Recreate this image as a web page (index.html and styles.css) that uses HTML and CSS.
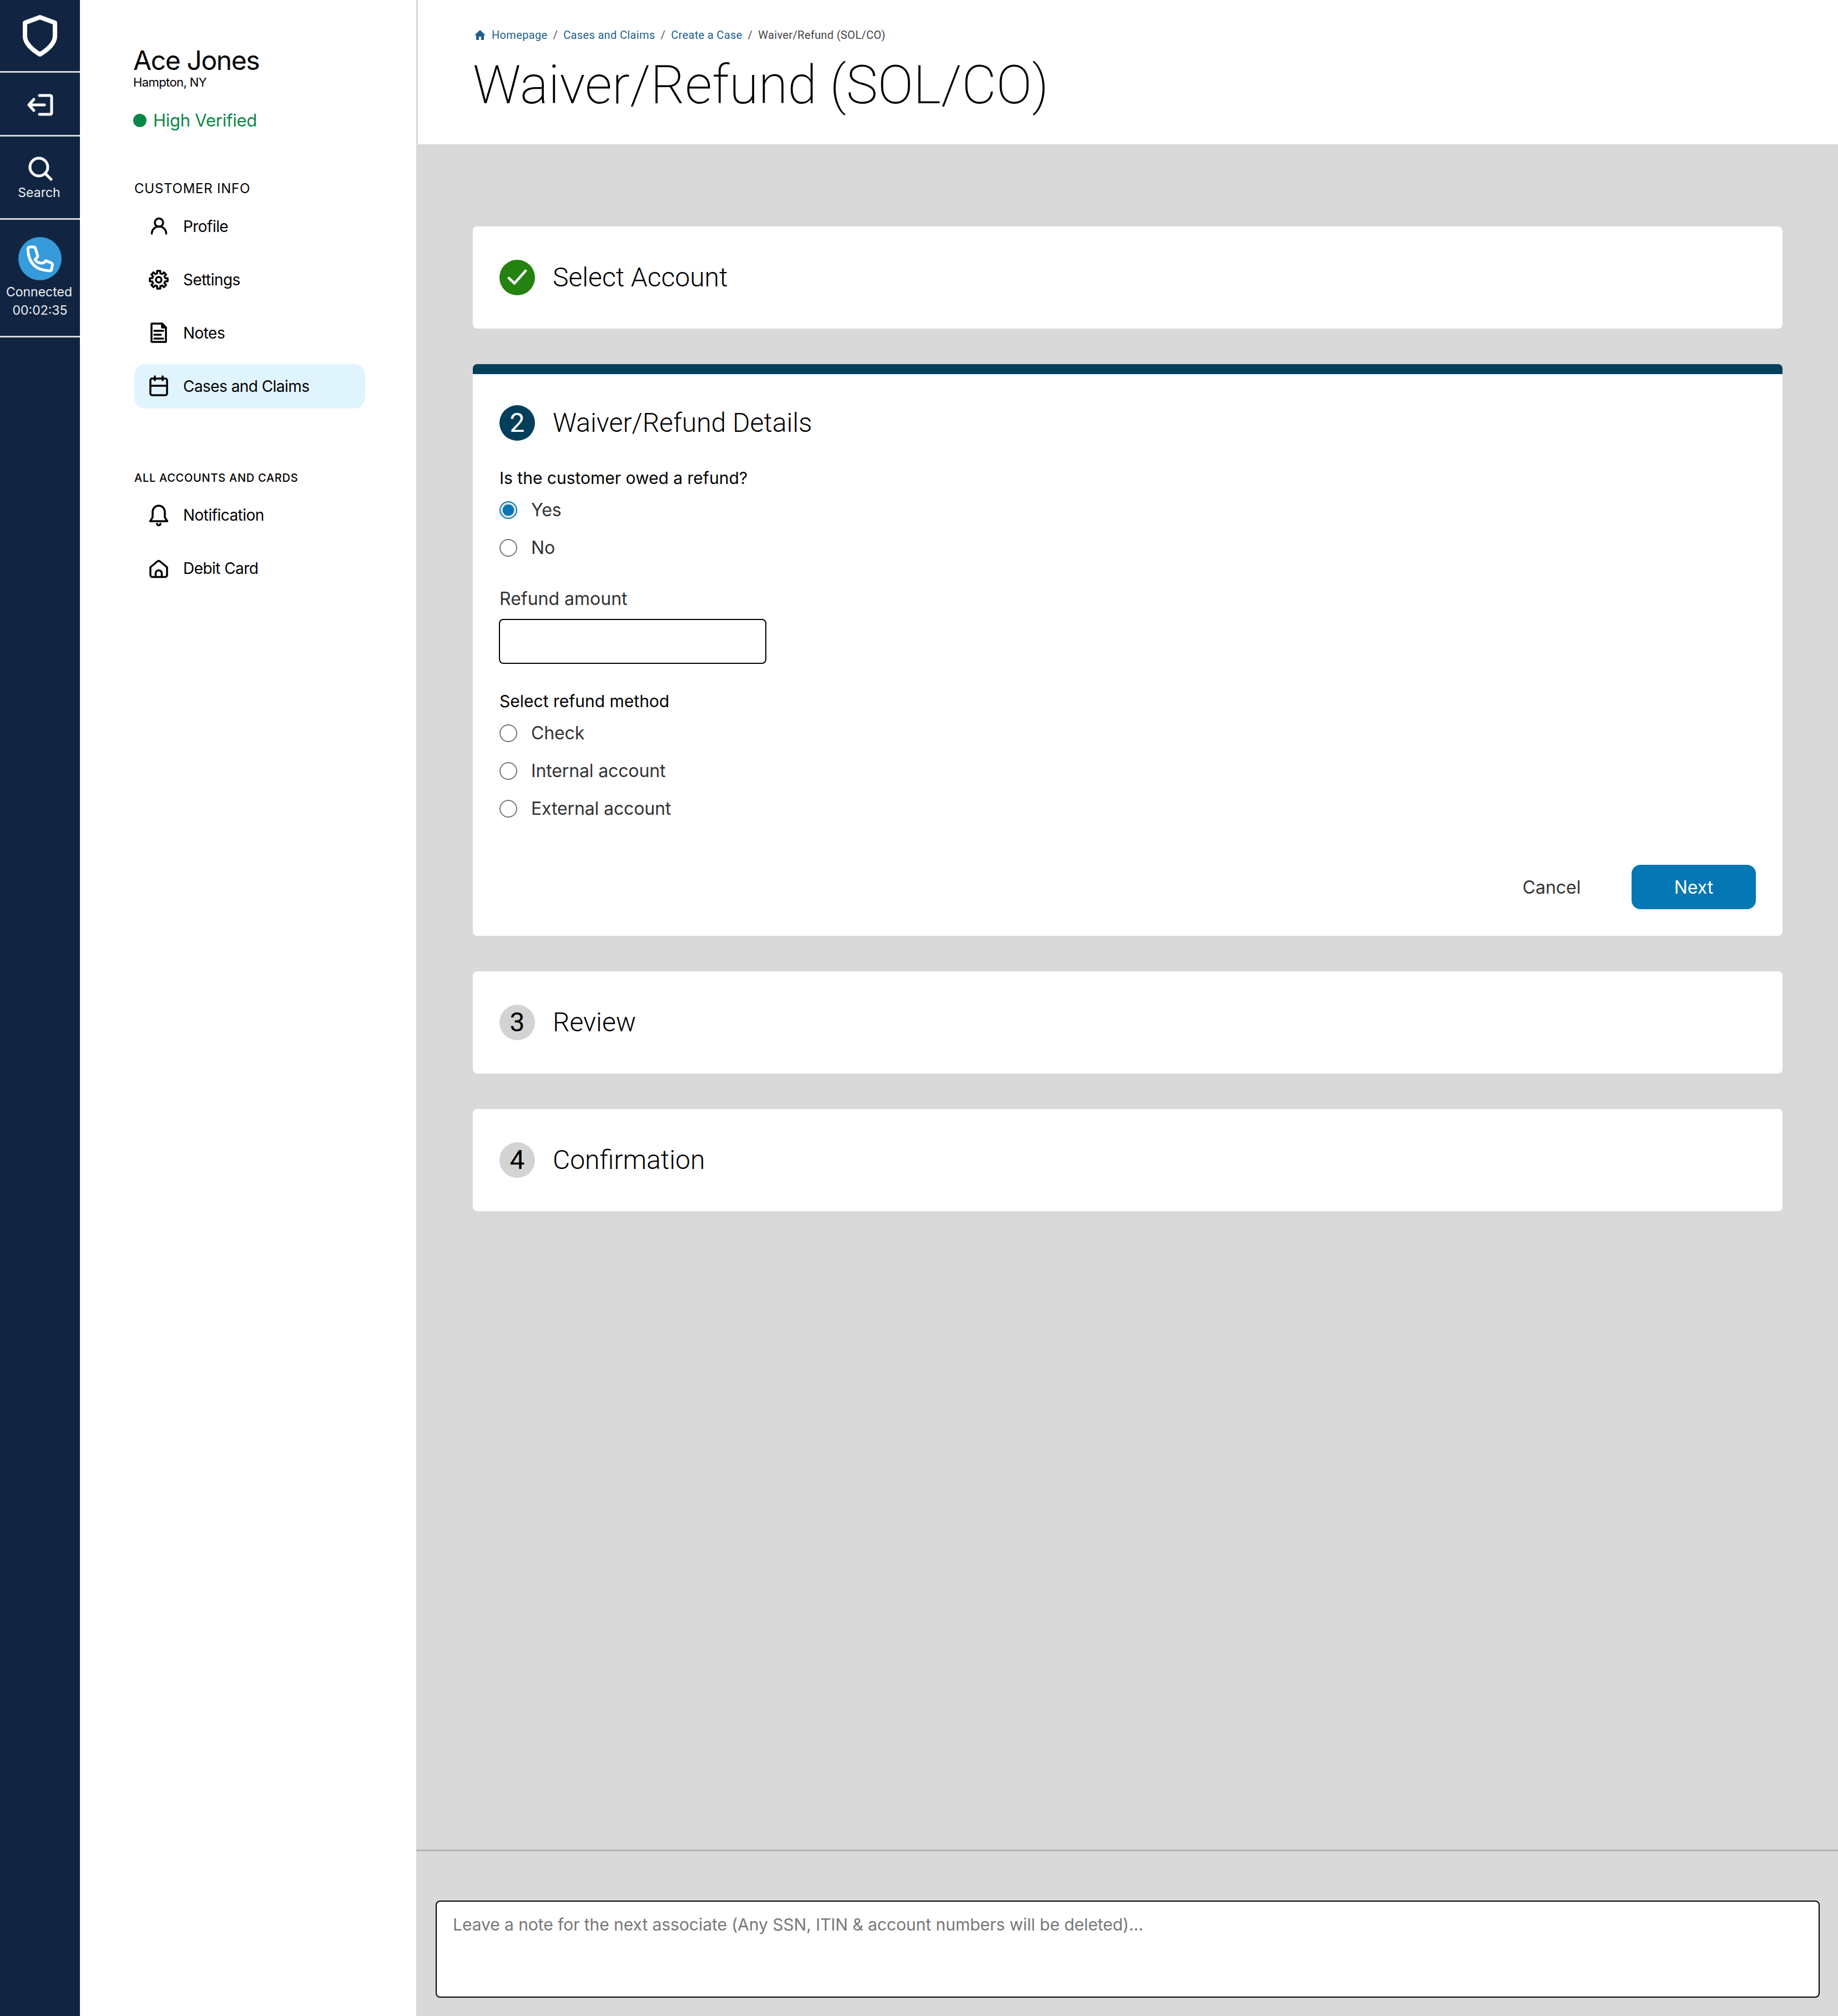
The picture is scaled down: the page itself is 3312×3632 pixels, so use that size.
FILE: index.html
```
<!DOCTYPE html>
<html lang="en">
<head>
<meta charset="utf-8">
<title>Waiver/Refund (SOL/CO)</title>
<link rel="stylesheet" href="styles.css">
</head>
<body>
<div class="app">
  <nav class="rail">
    <div class="rail-sec rail-logo">
      <svg class="ic-shield" viewBox="0 0 62 75"><path d="M31 4 L58 14 V38 C58 50 46 62 31 71 C16 62 4 50 4 38 V14 Z"/></svg>
    </div>
    <div class="rail-sec rail-exit">
      <svg class="ic-exit" viewBox="0 0 48 40"><path d="M23 3 H42 Q45 3 45 6 V34 Q45 37 42 37 H23 M4 20 H32 M13 10 L4 20 L13 30"/></svg>
    </div>
    <div class="rail-sec rail-search">
      <svg class="ic-search" viewBox="0 0 44 44"><circle cx="19" cy="19" r="16"/><path d="M31 31 L41 41"/></svg>
      <span class="rail-text">Search</span>
    </div>
    <div class="rail-sec rail-call">
      <svg class="ic-phone" viewBox="36 473 234 234"><circle class="ph-bg" cx="153" cy="590" r="117"/><path class="ph-line" d="M97 527 H118 Q126 527 128 534 L140 572 Q142 580 136 585 L126 594 Q142 622 176 611 L184 601 L214 613 Q222 617 220 625 L216 648 Q214 656 205 656 Q92 650 88 540 Q88 527 97 527 Z"/></svg>
      <span class="rail-text rail-text-a">Connected</span>
      <span class="rail-text">00:02:35</span>
    </div>
  </nav>

  <aside class="side">
    <h2 class="cust-name">Ace Jones</h2>
    <p class="cust-loc">Hampton, NY</p>
    <p class="cust-status"><span class="dot"></span>High Verified</p>

    <h3 class="side-head">CUSTOMER INFO</h3>
    <ul class="nav">
      <li class="nav-item">
        <svg class="nav-ic" viewBox="0 0 40 40"><circle cx="20.5" cy="13" r="7.5"/><path d="M7.5 33 a13 13 0 0 1 26 0"/></svg>
        <span>Profile</span>
      </li>
      <li class="nav-item">
        <svg class="nav-ic" viewBox="-20 -20 40 40"><polygon points="16.05,2.83 11.64,2.9 10.29,6.18 13.35,9.35 9.35,13.35 6.18,10.29 2.9,11.64 2.83,16.05 -2.83,16.05 -2.9,11.64 -6.18,10.29 -9.35,13.35 -13.35,9.35 -10.29,6.18 -11.64,2.9 -16.05,2.83 -16.05,-2.83 -11.64,-2.9 -10.29,-6.18 -13.35,-9.35 -9.35,-13.35 -6.18,-10.29 -2.9,-11.64 -2.83,-16.05 2.83,-16.05 2.9,-11.64 6.18,-10.29 9.35,-13.35 13.35,-9.35 10.29,-6.18 11.64,-2.9 16.05,-2.83"/><circle cx="0" cy="0" r="5"/></svg>
        <span>Settings</span>
      </li>
      <li class="nav-item">
        <svg class="nav-ic" viewBox="0 0 40 40"><path d="M8 3 H26 L33 10 V36 H8 Q7 36 7 35 V4 Q7 3 8 3 Z"/><path class="fill" d="M26 3 L33 10 H26 Z"/><path d="M12 16 H28 M12 23 H24 M12 30 H28"/></svg>
        <span>Notes</span>
      </li>
      <li class="nav-item nav-item-on">
        <svg class="nav-ic" viewBox="0 0 40 40"><rect x="5" y="6" width="30" height="30" rx="3"/><path d="M13 2 V9 M27 2 V9 M5 19 H35"/></svg>
        <span>Cases and Claims</span>
      </li>
    </ul>

    <h3 class="side-head side-head-sm">ALL ACCOUNTS AND CARDS</h3>
    <ul class="nav">
      <li class="nav-item">
        <svg class="nav-ic" viewBox="0 0 40 40"><path d="M4.5 31 H35.5 L31 24 V14 a11 11 0 0 0 -22 0 V24 Z"/><path d="M17 35.5 a3 3 0 0 0 6 0"/></svg>
        <span>Notification</span>
      </li>
      <li class="nav-item">
        <svg class="nav-ic" viewBox="0 0 40 40"><path d="M5 18 L17.5 7.5 Q20 5.5 22.5 7.5 L35 18 V32 a3.5 3.5 0 0 1 -3.5 3.5 H8.5 a3.5 3.5 0 0 1 -3.5 -3.5 Z"/><path d="M14.5 35 V29 a5.5 5.5 0 0 1 11 0 V35"/></svg>
        <span>Debit Card</span>
      </li>
    </ul>
  </aside>

  <main class="main">
    <header class="top">
      <div class="crumbs">
        <svg class="ic-home" viewBox="0 0 20 20"><path d="M10 1 L20 10.5 H17 V19 H12 V13 H8 V19 H3 V10.5 H0 Z"/></svg>
        <a class="crumb-link">Homepage</a><span class="sep">/</span>
        <a class="crumb-link">Cases and Claims</a><span class="sep">/</span>
        <a class="crumb-link">Create a Case</a><span class="sep">/</span>
        <span class="crumb-now">Waiver/Refund (SOL/CO)</span>
      </div>
      <h1 class="title">Waiver/Refund (SOL/CO)</h1>
    </header>

    <div class="content">
      <section class="card card-row">
        <span class="badge badge-done"><svg class="ic-check" viewBox="0 0 40 40"><path d="M5 21 L15 30.5 L35 8"/></svg></span>
        <h2 class="step-title">Select Account</h2>
      </section>

      <section class="card card-open">
        <div class="step-head">
          <span class="badge badge-now">2</span>
          <h2 class="step-title">Waiver/Refund Details</h2>
        </div>
        <form class="form">
          <p class="q q-first">Is the customer owed a refund?</p>
          <div class="radios radios-a">
            <label class="radio"><input type="radio" name="owed" checked><span>Yes</span></label>
            <label class="radio"><input type="radio" name="owed"><span>No</span></label>
          </div>
          <label class="q q-soft" for="amt">Refund amount</label>
          <input class="amount" id="amt" type="text">
          <p class="q q-method">Select refund method</p>
          <div class="radios radios-b">
            <label class="radio"><input type="radio" name="method"><span>Check</span></label>
            <label class="radio"><input type="radio" name="method"><span>Internal account</span></label>
            <label class="radio"><input type="radio" name="method"><span>External account</span></label>
          </div>
          <div class="actions">
            <button class="btn-cancel" type="button">Cancel</button>
            <button class="btn-next" type="button">Next</button>
          </div>
        </form>
      </section>

      <section class="card card-row">
        <span class="badge badge-todo">3</span>
        <h2 class="step-title">Review</h2>
      </section>

      <section class="card card-row">
        <span class="badge badge-todo">4</span>
        <h2 class="step-title">Confirmation</h2>
      </section>
    </div>

    <footer class="foot">
      <textarea class="note" placeholder="Leave a note for the next associate (Any SSN, ITIN &amp; account numbers will be deleted)..."></textarea>
    </footer>
  </main>
</div>
</body>
</html>
```

FILE: styles.css
```
* { box-sizing: border-box; }
html, body { margin: 0; padding: 0; }
body { font-family: "Inter", "Liberation Sans", sans-serif; color: #000; background: #fff; }
h1, h2, h3, p, ul { margin: 0; padding: 0; font-weight: 400; }
ul { list-style: none; }

.app { display: flex; height: 3632px; overflow: hidden; }

/* left rail */
.rail { width: 144px; flex: none; background: #112542; color: #eef1f4; display: flex; flex-direction: column; }
.rail-sec { display: flex; flex-direction: column; align-items: center; border-bottom: 3px solid #d8d8d8; }
.rail-logo { height: 131px; padding-top: 27px; }
.rail-exit { height: 115px; padding-top: 38px; }
.rail-search { height: 150px; padding-top: 36px; }
.rail-call { height: 212px; padding-top: 31px; box-shadow: 1px 0 0 #d8d8d8; }
.rail-text { font-size: 23px; line-height: 33px; white-space: nowrap; }
.rail-search .rail-text { margin-top: 5px; margin-left: -3px; }
.rail-text-a { margin-top: 5px; margin-left: -3px; }

.ic-shield { width: 62px; height: 75px; }
.ic-shield path { fill: none; stroke: #fff; stroke-width: 8; stroke-linejoin: round; }
.ic-exit { width: 48px; height: 40px; margin-left: -1px; }
.ic-exit path { fill: none; stroke: #fff; stroke-width: 5; stroke-linecap: round; stroke-linejoin: round; }
.ic-search { width: 44px; height: 44px; margin-left: 1px; }
.ic-search circle, .ic-search path { fill: none; stroke: #fff; stroke-width: 5; stroke-linecap: round; }
.ic-phone { width: 78px; height: 78px; }
.ph-bg { fill: #359bdb; }
.ph-line { fill: none; stroke: #fff; stroke-width: 15; stroke-linejoin: round; }

/* customer sidebar */
.side { width: 606px; flex: none; padding: 81px 0 0 96px; background: #fff; }
.cust-name { font-size: 48px; line-height: 56px; letter-spacing: -1.4px; }
.cust-loc { font-size: 22px; line-height: 24px; letter-spacing: -0.6px; margin-top: -1px; }
.cust-status { display: flex; align-items: center; gap: 12px; margin-top: 37px; font-size: 31px; line-height: 40px; letter-spacing: -0.25px; color: #0a8746; }
.dot { width: 24px; height: 24px; border-radius: 50%; background: #0a8746; }
.side-head { margin: 87px 0 12px 2px; font-size: 24px; line-height: 32px; letter-spacing: 0.75px; }
.side-head-sm { margin: 111px 0 13px 2px; font-size: 20px; line-height: 28px; font-weight: 500; letter-spacing: 0.73px; }
.nav { display: flex; flex-direction: column; gap: 16px; width: 416px; margin-left: 2px; }
.nav-item { display: flex; align-items: center; gap: 24px; height: 80px; padding-left: 24px; border-radius: 20px; font-size: 28px; line-height: 36px; letter-spacing: -0.55px; }
.nav-item-on { background: #e0f4fe; }
.nav-ic { width: 40px; height: 40px; flex: none; }
.nav-ic circle, .nav-ic path, .nav-ic rect, .nav-ic polygon { fill: none; stroke: #000; stroke-width: 3.5; stroke-linecap: round; stroke-linejoin: round; }
.nav-ic .fill { fill: #000; }

/* main */
.main { flex: 1; min-width: 0; display: flex; flex-direction: column; background: #d9d9d9; }
.top { height: 260px; flex: none; background: #fff; border-left: 3px solid #d9d9d9; padding: 51px 0 0 99px; }
.crumbs { display: flex; align-items: center; height: 24px; font-family: "Roboto", "Liberation Sans", sans-serif; font-size: 20px; line-height: 24px; letter-spacing: 0.35px; color: #444; }
.ic-home { width: 20px; height: 20px; margin: 0 11px 0 3px; fill: #21618c; }
.crumb-link { color: #21618c; }
.sep { margin: 0 10px; color: #555; }
.sep:last-of-type { margin-right: 12px; }
.title { margin-top: 22px; font-family: "Roboto", "Liberation Sans", sans-serif; font-weight: 200; font-size: 96px; line-height: 112px; white-space: nowrap; }

.content { flex: 1; min-height: 0; padding: 148px 100px 0 102px; display: flex; flex-direction: column; gap: 64px; }
.card { background: #fff; border-radius: 8px; }
.card-row { height: 184px; flex: none; display: flex; align-items: center; gap: 32px; padding-left: 48px; }
.card-open { height: 1030px; flex: none; border-top: 18px solid #033e5b; padding: 56px 48px 0; }
.step-head { display: flex; align-items: center; gap: 32px; }
.step-title { font-family: "Roboto", "Liberation Sans", sans-serif; font-weight: 300; font-size: 48px; line-height: 64px; }
.badge { width: 64px; height: 64px; flex: none; border-radius: 50%; display: flex; align-items: center; justify-content: center; font-family: "Roboto", "Liberation Sans", sans-serif; font-size: 48px; line-height: 64px; }
.badge-done { background: #268210; }
.badge-now { background: #033e5b; color: #fff; }
.badge-todo { background: #d3d3d3; color: #000; }
.ic-check { width: 40px; height: 40px; }
.ic-check path { fill: none; stroke: #fff; stroke-width: 4.5; stroke-linecap: round; stroke-linejoin: round; }

.form { display: flex; flex-direction: column; align-items: flex-start; }
.q { display: block; font-size: 30px; line-height: 40px; color: #000; }
.q-first { margin-top: 47px; }
.q-soft { margin-top: 38px; font-size: 32px; color: #333; }
.q-method { margin-top: 47px; }
.radios { display: flex; flex-direction: column; }
.radios-a { margin-top: 4px; }
.radios-b { margin-top: 4px; }
.radio { display: flex; align-items: center; gap: 25px; height: 68px; font-size: 32px; line-height: 40px; letter-spacing: -0.14px; color: #333; }
.radio input { appearance: none; width: 32px; height: 32px; margin: 0; border: 2px solid #777; border-radius: 50%; background: #fff; }
.radio input:checked { border-color: #0477b4; background: radial-gradient(circle, #0477b4 0 10px, #e0e0e0 10.5px); }
.amount { width: 482px; height: 81px; margin-top: 16px; margin-left: -1px; border: 2px solid #000; border-radius: 8px; background: #fff; }
.actions { display: flex; align-items: center; align-self: flex-end; gap: 45px; margin-top: 67px; }
.btn-cancel { width: 198px; height: 80px; padding: 2px 0 0; border: 0; background: none; font: 400 32px/40px "Inter", "Liberation Sans", sans-serif; color: #333; }
.btn-next { width: 224px; height: 80px; padding: 2px 0 0; border: 0; border-radius: 16px; background: #0477b4; color: #fff; font: 400 32px/40px "Inter", "Liberation Sans", sans-serif; }

.foot { height: 300px; flex: none; border-top: 3px solid #b5b1b1; padding: 89px 33px 33px 35px; }
.note { display: block; width: 100%; height: 175px; resize: none; border: 2px solid #000; border-radius: 8px; padding: 21px 29px; background: #fff; font: 400 30px/40px "Inter", "Liberation Sans", sans-serif; letter-spacing: -0.055px; color: #333; outline: 0; }
.note::placeholder { color: #777; opacity: 1; }
```
